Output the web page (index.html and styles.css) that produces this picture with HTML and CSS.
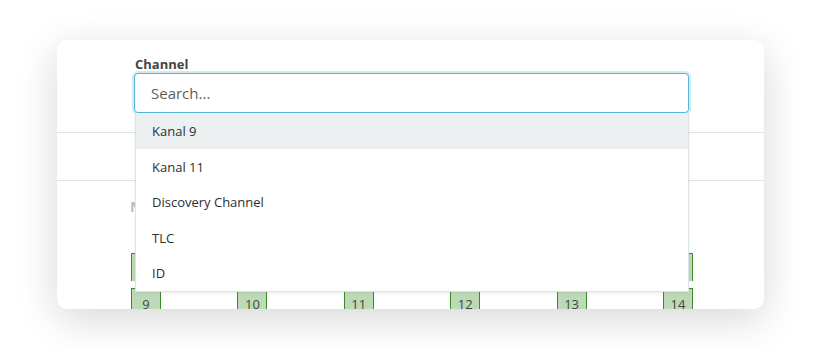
FILE: index.html
```html
<!DOCTYPE html>
<html lang="en">
<head>
    <meta charset="UTF-8">
    <meta name="viewport" content="width=device-width, initial-scale=1.0">
    <title>Channel picker</title>
    <link rel="stylesheet" href="styles.css">
</head>
<body>
    <div class="page">
        <div class="card">
            <!-- Filter with the search field -->
            <div class="filter">
                <label class="label" for="channel-search">Channel</label>
                <input class="search" id="channel-search" type="text" placeholder="Search...">
            </div>

            <div class="toolbar"></div>

            <!-- Schedule behind the dropdown -->
            <div class="schedule">
                <div class="day">Network</div>
                <div class="slots">
                    <div class="slot"></div>
                    <div class="slot"></div>
                    <div class="slot"></div>
                    <div class="slot"></div>
                    <div class="slot"></div>
                    <div class="slot"></div>
                </div>
                <div class="slots">
                    <div class="slot">9</div>
                    <div class="slot">10</div>
                    <div class="slot">11</div>
                    <div class="slot">12</div>
                    <div class="slot">13</div>
                    <div class="slot">14</div>
                </div>
            </div>

            <!-- Open dropdown -->
            <ul class="options">
                <li class="option active">Kanal 9</li>
                <li class="option">Kanal 11</li>
                <li class="option">Discovery Channel</li>
                <li class="option">TLC</li>
                <li class="option">ID</li>
            </ul>
        </div>
    </div>
</body>
</html>
```

FILE: styles.css
```css
body {
    margin: 0;
    background-color: #ffffff;
    font-family: 'Open Sans', 'Noto Sans', sans-serif;
    color: #333333;
}
.page {
    height: 349px;
    padding: 40px 57px 0 57px;
    box-sizing: border-box;
    overflow: hidden;
}
.card {
    position: relative;
    width: 707px;
    height: 269px;
    background-color: #ffffff;
    border-radius: 10px;
    box-shadow: 0 10px 40px rgba(0, 0, 0, 0.16);
    overflow: hidden;
}
.filter {
    height: 93px;
    box-sizing: border-box;
    padding: 15px 0 0 77px;
    border-bottom: 1px solid #e2e2e2;
}
.label {
    display: block;
    font-size: 13px;
    line-height: 18px;
    font-weight: 700;
    color: #444444;
    margin: 0 0 0 1px;
}
.search {
    display: block;
    width: 555px;
    height: 40px;
    box-sizing: border-box;
    padding: 0 16px;
    border: 1px solid #4fb9dc;
    border-radius: 4px;
    box-shadow: 0 0 0 2px #d5e9f0;
    font-family: inherit;
    font-size: 15px;
    color: #333333;
    outline: none;
}
.search::placeholder {
    color: #5e5e5e;
}
.toolbar {
    height: 47px;
    border-bottom: 1px solid #e2e2e2;
}
.schedule {
    padding: 16px 0 0 73px;
}
.day {
    font-size: 14px;
    line-height: 20px;
    font-weight: 700;
    color: #bdbdbd;
    margin-bottom: 36px;
}
.slots {
    display: flex;
    justify-content: space-between;
    width: 562px;
    margin: 0 0 7px 1px;
}
.slot {
    width: 30px;
    height: 28px;
    box-sizing: border-box;
    padding-top: 5px;
    background-color: #bddab6;
    border: 1px solid #3f8a2c;
    border-bottom: none;
    text-align: center;
    font-size: 13px;
    line-height: 20px;
    color: #444444;
}
.options {
    position: absolute;
    top: 73px;
    left: 78px;
    width: 554px;
    margin: 0;
    padding: 0;
    list-style: none;
    background-color: #ffffff;
    border: 1px solid #dde3e8;
    border-top: none;
    box-sizing: border-box;
    box-shadow: 0 2px 4px rgba(0, 0, 0, 0.06);
}
.option {
    height: 35.5px;
    line-height: 36px;
    padding-left: 16px;
    font-size: 13px;
    color: #2e2e2e;
}
.option.active {
    background-color: #edf0f1;
}
```
